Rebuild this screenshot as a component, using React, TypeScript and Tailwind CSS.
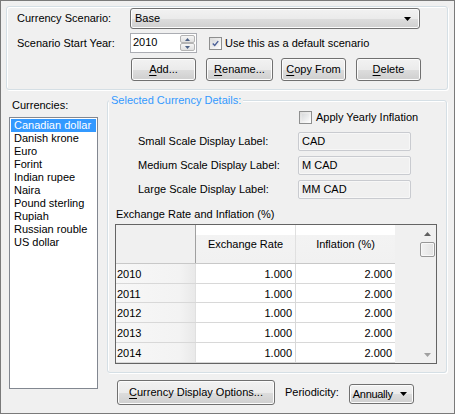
import React from "react";

const btn =
  "flex items-center justify-center h-[23px] rounded-[3px] border border-[#707070] bg-[linear-gradient(#f2f2f2_0%,#ebebeb_50%,#dddddd_51%,#cfcfcf_100%)] shadow-[inset_0_0_0_1px_#fcfcfc] whitespace-nowrap";

function Arrow() {
  return (
    <svg width="7" height="4" viewBox="0 0 7 4">
      <path d="M0 0h7L3.5 4z" fill="#000" />
    </svg>
  );
}

function Check({ checked }: { checked?: boolean }) {
  return (
    <div className="w-[13px] h-[13px] border border-[#8e8f8f] bg-[linear-gradient(135deg,#dcdcdc,#ffffff)] p-[2px] flex items-center justify-center shrink-0">
      <div className="w-full h-full bg-[linear-gradient(135deg,#d9dbdd,#f7f7f7)] flex items-center justify-center">
        {checked && (
          <svg width="9" height="9" viewBox="0 0 9 9">
            <path d="M1 4.5l2.5 2.5L8 1.5" fill="none" stroke="#4a5f97" strokeWidth="1.8" />
          </svg>
        )}
      </div>
    </div>
  );
}

function U({ c }: { c: string }) {
  return <span className="underline underline-offset-2">{c}</span>;
}

const currencies = [
  "Canadian dollar",
  "Danish krone",
  "Euro",
  "Forint",
  "Indian rupee",
  "Naira",
  "Pound sterling",
  "Rupiah",
  "Russian rouble",
  "US dollar",
];

const rows = ["2010", "2011", "2012", "2013", "2014"];

export default function App() {
  return (
    <div className="w-[455px] h-[414px] bg-[#f0f0f0] border border-[#7a7a7a] font-['Liberation_Sans',Arial,sans-serif] text-[11px] text-black leading-none overflow-hidden">
      {/* Scenario */}
      <div className="ml-[5px] mt-[5px] w-[442px] h-[84px] border border-[#d5dfe5] rounded-[3px] shadow-[inset_1px_1px_0_#ffffff,1px_1px_0_#ffffff]">
        <div className="flex items-center h-[21px] mt-[1px]">
          <span className="w-[123px] pl-[10px]">Currency Scenario:</span>
          <div className="w-[290px] h-[21px] rounded-[3px] border border-[#707070] bg-[linear-gradient(#f2f2f2_0%,#ebebeb_50%,#dddddd_51%,#cfcfcf_100%)] shadow-[inset_0_0_0_1px_#fcfcfc] flex items-center justify-between pl-[4px] pr-[8px]">
            <span>Base</span>
            <Arrow />
          </div>
        </div>
        <div className="flex items-center h-[20px] mt-[4px]">
          <span className="w-[123px] pl-[10px]">Scenario Start Year:</span>
          <div className="w-[67px] h-[20px] border border-[#abadb3] bg-white flex">
            <span className="flex-1 pl-[2px] pt-[3px]">2010</span>
            <div className="w-[16px] flex flex-col py-[1px] pr-[1px]">
              <div className="flex-1 border border-[#b4b4b4] rounded-[2px] bg-[linear-gradient(#f6f6f6,#e0e0e0)] flex items-center justify-center">
                <svg width="5" height="3" viewBox="0 0 5 3">
                  <path d="M0 3h5L2.5 0z" fill="#4d6185" />
                </svg>
              </div>
              <div className="flex-1 border border-[#b4b4b4] rounded-[2px] bg-[linear-gradient(#f6f6f6,#e0e0e0)] flex items-center justify-center">
                <svg width="5" height="3" viewBox="0 0 5 3">
                  <path d="M0 0h5L2.5 3z" fill="#4d6185" />
                </svg>
              </div>
            </div>
          </div>
          <div className="ml-[12px]">
            <Check checked />
          </div>
          <span className="ml-[3px]">Use this as a default scenario</span>
        </div>
        <div className="flex items-center mt-[5px] pl-[124px]">
          <div className={`${btn} w-[65px]`}>
            <U c="A" />dd...
          </div>
          <div className={`${btn} w-[67px] ml-[10px]`}>
            <U c="R" />ename...
          </div>
          <div className={`${btn} w-[65px] ml-[8px]`}>
            <U c="C" />opy From
          </div>
          <div className={`${btn} w-[65px] ml-[10px]`}>
            <U c="D" />elete
          </div>
        </div>
      </div>

      <div className="flex">
        {/* Currencies list */}
        <div className="ml-[8px] w-[89px]">
          <div className="mt-[8px] h-[14px] pl-[3px] leading-[14px]">Currencies:</div>
          <div className="mt-[5px] h-[272px] border border-[#828790] bg-white p-[1px]">
            {currencies.map((c, i) => (
              <div
                key={c}
                className={`h-[13px] leading-[13px] pl-[3px] whitespace-nowrap ${
                  i === 0 ? "bg-[#3399ff] text-white" : ""
                }`}
              >
                {c}
              </div>
            ))}
          </div>
        </div>

        {/* Details */}
        <div className="ml-[9px] mt-[10px]">
          <div className="relative w-[340px] h-[273px] border border-[#d5dfe5] rounded-[3px] shadow-[inset_1px_1px_0_#ffffff,1px_1px_0_#ffffff]">
            <span className="absolute left-[1px] -top-[7px] bg-[#f0f0f0] px-[2px] text-[#3399ff] leading-[13px]">
              Selected Currency Details:
            </span>
            <div className="flex items-center h-[15px] mt-[9px] pl-[191px]">
              <Check />
              <span className="ml-[4px]">Apply Yearly Inflation</span>
            </div>
            {[
              ["Small Scale Display Label:", "CAD"],
              ["Medium Scale Display Label:", "M CAD"],
              ["Large Scale Display Label:", "MM CAD"],
            ].map(([l, v], i) => (
              <div
                key={l}
                className={`flex items-center h-[19px] ${i === 0 ? "mt-[7px]" : "mt-[5px]"}`}
              >
                <span className="w-[190px] pl-[30px] whitespace-nowrap">{l}</span>
                <div className="w-[113px] h-[19px] border border-[#c9cbd0] rounded-[2px] bg-[#f0f0f0] shadow-[inset_0_0_0_1px_#f7f7f7] pl-[3px] flex items-center">
                  {v}
                </div>
              </div>
            ))}
            <div className="mt-[8px] h-[14px] leading-[14px] pl-[8px]">
              Exchange Rate and Inflation (%)
            </div>

            {/* Grid */}
            <div className="mt-[3px] ml-[7px] w-[322px] h-[140px] border border-[#646464] flex bg-[#f0f0f0]">
              <div className="w-[279px] flex flex-col">
                <div className="flex h-[39px] border-b border-[#c8c8c8]">
                  <div className="w-[80px] bg-[#f0f0f0] border-r border-[#a0a0a0]" />
                  <div className="w-[100px] border-r border-[#e0e0e0] bg-[linear-gradient(#ffffff_0%,#ffffff_25%,#f3f3f3_26%,#f1f1f1_100%)] flex items-center justify-center pt-[2px]">
                    Exchange Rate
                  </div>
                  <div className="w-[99px] bg-[linear-gradient(#ffffff_0%,#ffffff_25%,#f3f3f3_26%,#f1f1f1_100%)] flex items-center justify-center pt-[2px]">
                    Inflation (%)
                  </div>
                </div>
                {rows.map((r) => (
                  <div key={r} className="flex h-[20px] border-b border-[#d8d8d8]">
                    <div className="w-[80px] bg-[linear-gradient(90deg,#f7f7f7,#f3f3f3_80%,#e9e9e9)] border-r border-[#e0e0e0] pl-[1px] flex items-center pt-[2px]">
                      {r}
                    </div>
                    <div className="w-[100px] bg-white border-r border-[#d8d8d8] flex items-center justify-end pr-[3px] pt-[2px]">
                      1.000
                    </div>
                    <div className="w-[99px] bg-white flex items-center justify-end pr-[3px] pt-[2px]">
                      2.000
                    </div>
                  </div>
                ))}
              </div>
              <div className="w-[24px]" />
              <div className="w-[17px] bg-[#f0f0f0] flex flex-col items-center">
                <div className="h-[17px] flex items-center justify-center">
                  <svg width="7" height="4" viewBox="0 0 7 4">
                    <path d="M0 4h7L3.5 0z" fill="#606060" />
                  </svg>
                </div>
                <div className="w-[15px] h-[15px] border border-[#979797] rounded-[2px] bg-[linear-gradient(90deg,#f2f2f2,#e2e2e2)] shadow-[inset_0_0_0_1px_#f8f8f8]" />
                <div className="flex-1" />
                <div className="h-[17px] flex items-center justify-center">
                  <svg width="7" height="4" viewBox="0 0 7 4">
                    <path d="M0 0h7L3.5 4z" fill="#a0a0a0" />
                  </svg>
                </div>
              </div>
            </div>
          </div>

          <div className="flex items-center mt-[7px] pl-[10px]">
            <div className={`${btn} w-[158px] h-[25px]`}>
              <U c="C" />urrency Display Options...
            </div>
            <span className="ml-[10px]">Periodicity:</span>
            <div className="ml-[10px] mt-[3px] w-[65px] h-[20px] rounded-[3px] border border-[#707070] bg-[linear-gradient(#f2f2f2_0%,#ebebeb_50%,#dddddd_51%,#cfcfcf_100%)] shadow-[inset_0_0_0_1px_#fcfcfc] flex items-center justify-between pl-[3px] pr-[6px]">
              <span className="tracking-[-0.3px]">Annually</span>
              <Arrow />
            </div>
          </div>
        </div>
      </div>
    </div>
  );
}
